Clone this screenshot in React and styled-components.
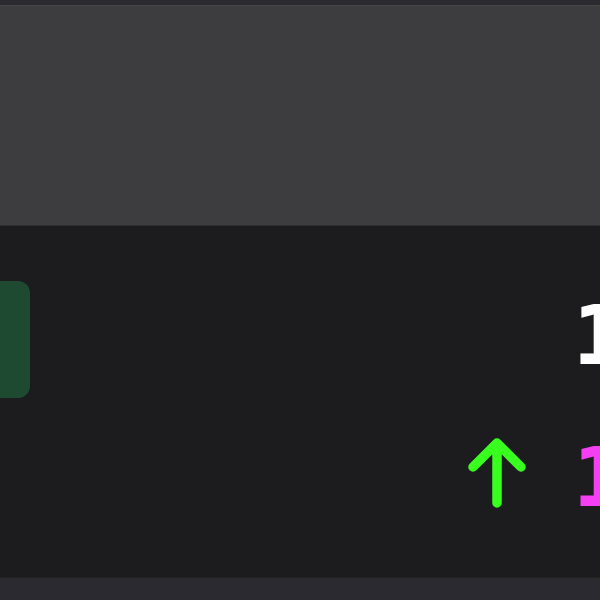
import React from "react";
import styled, { createGlobalStyle } from "styled-components";

const Global = createGlobalStyle`
  html, body {
    margin: 0;
    padding: 0;
    background: #1c1c1e;
    overflow: hidden;
  }
`;

const Screen = styled.div`
  width: 600px;
  height: 600px;
  overflow: hidden;
  display: flex;
  flex-direction: column;
  background: #1c1c1e;
  font-family: "DejaVu Sans Mono", monospace;
`;

const TopStrip = styled.div`
  height: 5px;
  background: #2a2a30;
  flex-shrink: 0;
`;

const Header = styled.div`
  height: 219px;
  background: #3d3d40;
  border-top: 1px solid #45454a;
  border-bottom: 1px solid #2e2e31;
  flex-shrink: 0;
`;

const Body = styled.div`
  flex: 1;
  display: flex;
  align-items: flex-start;
  padding-top: 55px;
`;

const Tile = styled.div`
  width: 90px;
  height: 117px;
  margin-left: -60px;
  border-radius: 12px;
  background: #1e4a31;
  flex-shrink: 0;
`;

const Values = styled.div`
  margin-left: auto;
  margin-right: -223px;
  display: grid;
  grid-template-columns: 109px 250px;
  grid-template-rows: 140px 80px;
  align-items: start;
`;

const Value = styled.div`
  grid-column: 2;
  font-size: 82px;
  font-weight: bold;
  line-height: 1;
  white-space: nowrap;
  color: ${(p) => p.color};
  margin-top: ${(p) => p.offset}px;
`;

const Arrow = styled.svg`
  grid-column: 1;
  display: block;
  margin-top: ${(p) => p.offset}px;
`;

const BottomStrip = styled.div`
  height: 22px;
  background: #2a2a30;
  border-top: 1px solid #232326;
  flex-shrink: 0;
`;

export default function App() {
  return (
    <>
      <Global />
      <Screen>
        <TopStrip />
        <Header />
        <Body>
          <Tile />
          <Values>
            <Value color="#ffffff" offset={14}>
              1,284
            </Value>
            <Arrow offset={17} width="66" height="70" viewBox="0 0 66 70">
              <path
                d="M33 5 L9 29 M33 5 L57 29 M33 5 L33 65"
                stroke="#39ff1f"
                strokeWidth="9.5"
                strokeLinecap="round"
                strokeLinejoin="round"
                fill="none"
              />
            </Arrow>
            <Value color="#f43ff4" offset={16}>
              12%
            </Value>
          </Values>
        </Body>
        <BottomStrip />
      </Screen>
    </>
  );
}
